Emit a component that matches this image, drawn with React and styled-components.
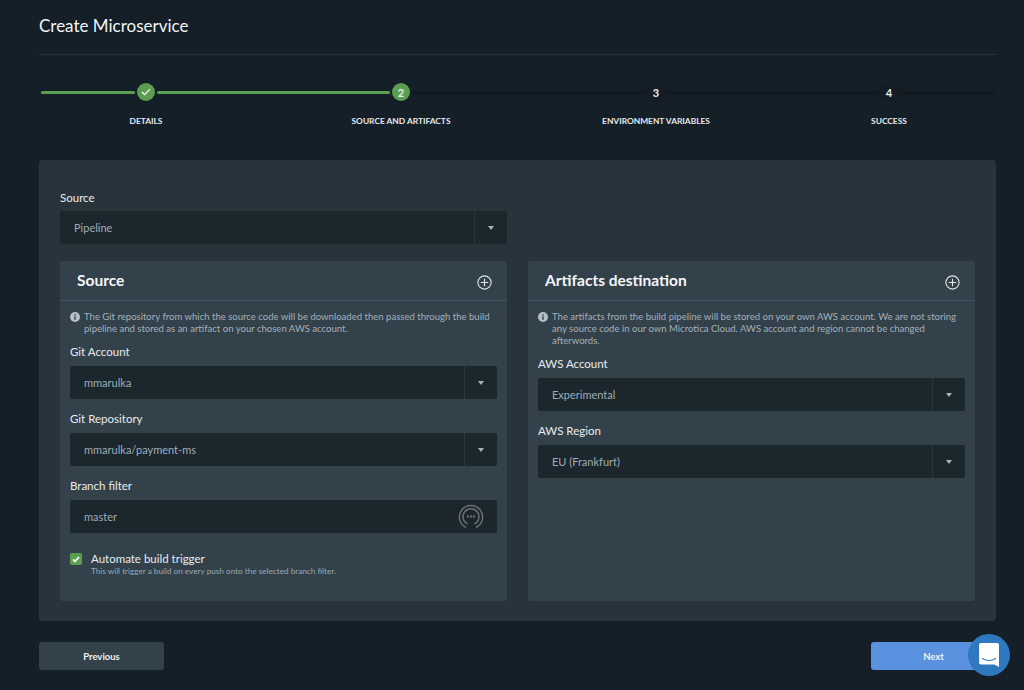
import React from 'react'
import styled, { createGlobalStyle } from 'styled-components'

const GlobalStyle = createGlobalStyle`
  html, body {
    margin: 0;
    padding: 0;
    height: 100%;
    background: #141f28;
    font-family: Lato, "Open Sans", sans-serif;
    color: #fff;
    -webkit-font-smoothing: antialiased;
  }
`

const Page = styled.div`
  box-sizing: border-box;
  width: 1024px;
  height: 690px;
  padding: 0 28px 0 39px;
  overflow: hidden;
  position: relative;
`

const Header = styled.div`
  height: 55px;
  box-sizing: border-box;
  padding-top: 14px;
  border-bottom: 1px solid #27333c;
`

const Title = styled.h1`
  margin: 0;
  font-size: 17px;
  line-height: 23px;
  font-weight: 400;
  color: #f2f5f7;
`

const Stepper = styled.div`
  display: flex;
  align-items: flex-start;
  height: 105px;
  padding: 27px 0 0 2px;
  box-sizing: border-box;
`

const Segment = styled.div`
  flex: ${(p) => (p.$width ? `0 0 ${p.$width}px` : 1)};
  height: ${(p) => (p.$done ? 3 : 4)}px;
  margin-top: 9px;
  border-radius: 2px;
  background: ${(p) => (p.$done ? '#5c9e50' : '#121a20')};
`

const Step = styled.div`
  flex: 0 0 22px;
  width: 22px;
  min-width: 0;
  display: flex;
  flex-direction: column;
  align-items: center;
`

const Dot = styled.div`
  width: ${(p) => (p.$active ? 18 : 20)}px;
  height: ${(p) => (p.$active ? 18 : 20)}px;
  margin: ${(p) => (p.$active ? 1 : 0)}px 0;
  border-radius: 50%;
  display: flex;
  align-items: center;
  justify-content: center;
  font-size: 11px;
  font-weight: 700;
  background: ${(p) => (p.$active ? '#5c9e50' : '#121d26')};
  color: #e8ecef;
`

const StepLabel = styled.div`
  margin-top: 14px;
  font-size: 8.4px;
  line-height: 11px;
  font-weight: 700;
  white-space: nowrap;
  color: #e6eaed;
`

const Panel = styled.div`
  height: 461px;
  box-sizing: border-box;
  padding: 31px 21px 0;
  background: #29333c;
  border-radius: 4px;
`

const Label = styled.div`
  font-size: 11.5px;
  line-height: 14px;
  margin-bottom: ${(p) => (p.$tight ? 6 : 7)}px;
  color: #e8ecef;
`

const TopField = styled.div`
  width: 447px;
  margin-bottom: 17px;
`

const Columns = styled.div`
  display: flex;
  gap: 21px;
`

const Card = styled.div`
  flex: 0 0 447px;
  height: 340px;
  background: #33414b;
  border-radius: 3px;
`

const CardHead = styled.div`
  height: 39px;
  display: flex;
  justify-content: space-between;
  align-items: center;
  padding: 0 15px 0 17px;
  border-bottom: 1px solid #445560;
`

const CardTitle = styled.h2`
  margin: 0 0 2px;
  font-size: 15.5px;
  font-weight: 700;
  color: #f4f6f8;
`

const CardBody = styled.div`
  padding: 10px 10px 0;
`

const Note = styled.div`
  display: flex;
  gap: 4px;
  font-size: 9.55px;
  line-height: 12px;
  color: #a3b0ba;
  margin-bottom: 10px;
`

const NoteIcon = styled.svg`
  flex: 0 0 10px;
  width: 10px;
  height: 10px;
  margin-top: 1px;
`

const Field = styled.div`
  margin-bottom: 13px;
`

const SelectBox = styled.div`
  height: 33px;
  display: flex;
  background: #1c262d;
  border-radius: 2px;
  font-size: 11px;
  color: #9fadb8;
`

const Value = styled.div`
  flex: 1;
  display: flex;
  align-items: center;
  justify-content: space-between;
  padding: 0 14px;
`

const Caret = styled.div`
  flex: 0 0 32px;
  display: flex;
  align-items: center;
  justify-content: center;
  border-left: 1px solid #2a353d;
  &::after {
    content: '';
    border: 3.5px solid transparent;
    border-top: 4px solid #a9b5be;
    border-bottom: 0;
  }
`

const BranchIcon = styled.svg`
  margin-right: -1px;
`

const CheckRow = styled.div`
  display: flex;
  gap: 9px;
  margin-top: 20px;
`

const CheckBox = styled.div`
  flex: 0 0 12px;
  width: 12px;
  height: 12px;
  border-radius: 2px;
  background: #5c9e50;
  display: flex;
  align-items: center;
  justify-content: center;
`

const CheckTitle = styled.div`
  font-size: 11.5px;
  line-height: 12px;
  color: #e8ecef;
`

const CheckHint = styled.div`
  font-size: 8.2px;
  line-height: 10px;
  margin-top: 1px;
  color: #9aa8b2;
`

const Footer = styled.div`
  display: flex;
  justify-content: space-between;
  padding-top: 21px;
`

const Button = styled.button`
  width: 125px;
  height: 28px;
  border: 0;
  border-radius: 3px;
  font-family: inherit;
  font-size: 9.5px;
  font-weight: 700;
  color: #eef1f4;
  background: ${(p) => (p.$primary ? '#5a92df' : '#33414b')};
`

const Chat = styled.div`
  position: absolute;
  left: 968px;
  top: 634px;
  width: 42px;
  height: 42px;
  border-radius: 50%;
  background: #2e78c0;
  display: flex;
  align-items: center;
  justify-content: center;
`

const PlusIcon = styled.svg`
  margin-top: 4px;
`

const Info = () => (
  <NoteIcon viewBox="0 0 10 10">
    <circle cx="5" cy="5" r="5" fill="#b4bfc8" />
    <rect x="4.3" y="4.2" width="1.4" height="3.6" fill="#33414b" />
    <rect x="4.3" y="2.2" width="1.4" height="1.3" fill="#33414b" />
  </NoteIcon>
)

const PlusCircle = () => (
  <PlusIcon width="15" height="15" viewBox="0 0 15 15" fill="none" stroke="#e4e8eb" strokeWidth="1.1">
    <circle cx="7.5" cy="7.5" r="6.6" />
    <path d="M7.5 3.8v7.4M3.8 7.5h7.4" />
  </PlusIcon>
)

const Select = ({ value }) => (
  <SelectBox>
    <Value>{value}</Value>
    <Caret />
  </SelectBox>
)

const steps = [
  { label: 'DETAILS', done: true, gap: 94 },
  { label: 'SOURCE AND ARTIFACTS', n: 2, active: true, gap: 233 },
  { label: 'ENVIRONMENT VARIABLES', n: 3, gap: 233 },
  { label: 'SUCCESS', n: 4, gap: 211 },
]

const App = () => (
  <Page>
    <GlobalStyle />
    <Header>
      <Title>Create Microservice</Title>
    </Header>

    <Stepper>
      {steps.map((s, i) => (
        <React.Fragment key={s.label}>
          <Segment $width={s.gap} $done={i < 2} />
          <Step>
            <Dot $active={s.done || s.active}>
              {s.done ? (
                <svg width="10" height="8" viewBox="0 0 10 8" fill="none" stroke="#fff" strokeWidth="1.2">
                  <path d="M1 4l2.6 2.6L9 1.2" />
                </svg>
              ) : (
                s.n
              )}
            </Dot>
            <StepLabel>{s.label}</StepLabel>
          </Step>
        </React.Fragment>
      ))}
      <Segment />
    </Stepper>

    <Panel>
      <TopField>
        <Label $tight>Source</Label>
        <Select value="Pipeline" />
      </TopField>
      <Columns>
        <Card>
          <CardHead>
            <CardTitle>Source</CardTitle>
            <PlusCircle />
          </CardHead>
          <CardBody>
            <Note>
              <Info />
              <div>
                The Git repository from which the source code will be downloaded then passed through the build
                pipeline and stored as an artifact on your chosen AWS account.
              </div>
            </Note>
            <Field>
              <Label>Git Account</Label>
              <Select value="mmarulka" />
            </Field>
            <Field>
              <Label>Git Repository</Label>
              <Select value="mmarulka/payment-ms" />
            </Field>
            <Field>
              <Label>Branch filter</Label>
              <SelectBox>
                <Value>
                  master
                  <BranchIcon width="26" height="26" viewBox="0 0 26 26" fill="none" stroke="#6b6f72" strokeWidth="1.4">
                    <path d="M8 23.5A11.6 11.6 0 1 1 18 23.5" />
                    <path d="M9.5 20A8 8 0 1 1 16.5 20" />
                    <circle cx="10" cy="12.5" r=".5" />
                    <circle cx="13" cy="12.5" r=".5" />
                    <circle cx="16" cy="12.5" r=".5" />
                  </BranchIcon>
                </Value>
              </SelectBox>
            </Field>
            <CheckRow>
              <CheckBox>
                <svg width="8" height="7" viewBox="0 0 8 7" fill="none" stroke="#fff" strokeWidth="1.8">
                  <path d="M1 3.5l2 2L7 1" />
                </svg>
              </CheckBox>
              <div>
                <CheckTitle>Automate build trigger</CheckTitle>
                <CheckHint>This will trigger a build on every push onto the selected branch filter.</CheckHint>
              </div>
            </CheckRow>
          </CardBody>
        </Card>
        <Card>
          <CardHead>
            <CardTitle>Artifacts destination</CardTitle>
            <PlusCircle />
          </CardHead>
          <CardBody>
            <Note>
              <Info />
              <div>
                The artifacts from the build pipeline will be stored on your own AWS account. We are not storing
                any source code in our own Microtica Cloud. AWS account and region cannot be changed
                afterwords.
              </div>
            </Note>
            <Field>
              <Label>AWS Account</Label>
              <Select value="Experimental" />
            </Field>
            <Field>
              <Label>AWS Region</Label>
              <Select value="EU (Frankfurt)" />
            </Field>
          </CardBody>
        </Card>
      </Columns>
    </Panel>

    <Footer>
      <Button>Previous</Button>
      <Button $primary>Next</Button>
    </Footer>

    <Chat>
      <svg width="20" height="24" viewBox="0 0 20 24">
        <path d="M2 0h16a2 2 0 0 1 2 2V24l-4.500-2.500H2a2 2 0 0 1-2-2V2a2 2 0 0 1 2-2z" fill="#fff" />
        <path d="M3.500 15.500c4 2.400 9 2.400 13 0" fill="none" stroke="#2e78c0" strokeWidth="1.1" strokeLinecap="round" />
      </svg>
    </Chat>
  </Page>
)

export default App
